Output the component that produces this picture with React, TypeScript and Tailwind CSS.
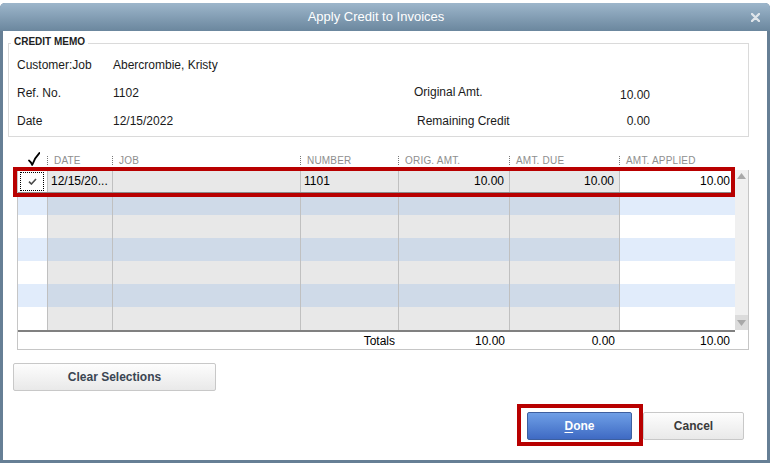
import React from "react";

type Col = { key: string; w: string; tint: "gray" | "white"; line: boolean };

const cols: Col[] = [
  { key: "chk", w: "w-[30px]", tint: "white", line: true },
  { key: "date", w: "w-[65px]", tint: "gray", line: true },
  { key: "job", w: "w-[188px]", tint: "gray", line: true },
  { key: "num", w: "w-[98px]", tint: "gray", line: true },
  { key: "orig", w: "w-[111px]", tint: "gray", line: true },
  { key: "due", w: "w-[110px]", tint: "gray", line: true },
  { key: "applied", w: "w-[115px]", tint: "white", line: false },
];

const headers = ["DATE", "JOB", "NUMBER", "ORIG. AMT.", "AMT. DUE", "AMT. APPLIED"];

function cellBg(tint: "gray" | "white", blue: boolean) {
  if (tint === "gray") return blue ? "bg-[#cfdae8]" : "bg-[#e8e8e8]";
  return blue ? "bg-[#e1ecfb]" : "bg-white";
}

function SmallCheck() {
  return (
    <svg width="9" height="7" viewBox="0 0 9 7">
      <path d="M1 3.6 L3.4 6 L8 1" fill="none" stroke="#4a4a4a" strokeWidth="1.6" />
    </svg>
  );
}

function HeaderCheck() {
  return (
    <svg width="12" height="14" viewBox="0 0 12 14">
      <path d="M1 8.5 C2.5 9.5 3.5 11 4.2 13 C5.8 8.5 8 4.5 11.5 1" fill="none" stroke="#000" strokeWidth="1.8" strokeLinecap="round" strokeLinejoin="round" />
    </svg>
  );
}

function DotSep() {
  return (
    <span className="flex flex-col gap-[1px] -ml-[1px]">
      {[0, 1, 2, 3, 4].map((d) => (
        <span key={d} className="block w-[1px] h-[1px] bg-[#777]" />
      ))}
    </span>
  );
}

function SelectedRow() {
  const vals: Record<string, string> = { date: "12/15/20...", num: "1101", orig: "10.00", due: "10.00", applied: "10.00" };
  return (
    <div className="flex h-[23px] border-b border-[#8c8c8c]">
      {cols.map((c) => {
        const bg = c.tint === "gray" ? "bg-[#e8e8e8]" : "bg-white";
        const right = c.key === "orig" || c.key === "due" || c.key === "applied";
        return (
          <div
            key={c.key}
            className={`${c.w} ${bg} ${c.line ? "border-r border-[#c0c0c0]" : ""} flex items-center ${right ? "justify-end pr-[5px]" : "pl-[3px]"} text-[12px] text-black`}
          >
            {c.key === "chk" ? (
              <div className="w-[24px] h-[19px] -ml-[1px] border border-dotted border-black flex items-center justify-center">
                <SmallCheck />
              </div>
            ) : (
              vals[c.key] ?? ""
            )}
          </div>
        );
      })}
    </div>
  );
}

export default function App() {
  const emptyRows = [1, 2, 3, 4, 5, 6];
  return (
    <div className="w-[772px] h-[465px] bg-white overflow-hidden" style={{ fontFamily: '"Liberation Sans", Arial, sans-serif' }}>
      <div className="w-[770px] h-[460px] mt-[3px] rounded-t-[5px] bg-[#667f95] flex flex-col overflow-hidden">
        {/* title bar */}
        <div className="h-[28px] bg-gradient-to-b from-[#9db6cb] to-[#6b879e] flex items-center">
          <div className="flex-1 text-center pl-[1px] text-[13px] text-white">Apply Credit to Invoices</div>
          <div className="w-[10px] mr-[9px] flex items-center">
            <svg width="9" height="9" viewBox="0 0 9 9">
              <path d="M1 1 L8 8 M8 1 L1 8" stroke="#dfe5ea" strokeWidth="2.4" strokeLinecap="round" />
            </svg>
          </div>
        </div>

        {/* content */}
        <div className="flex-1 mx-[3px] mb-[3px] bg-white relative flex flex-col">
          {/* credit memo */}
          <div className="relative mt-[12px] ml-[5px] w-[741px] h-[94px] border border-[#dadada] pt-[7px] pl-[8px] text-[12px] text-[#1a1a1a]">
            <div className="absolute -top-[9px] left-[2px] px-[3px] bg-white text-[10px] font-bold text-[#222] leading-[14px]">CREDIT MEMO</div>
            <div className="flex h-[28px] items-center">
              <div className="w-[96px]">Customer:Job</div>
              <div>Abercrombie, Kristy</div>
            </div>
            <div className="flex h-[28px] items-center">
              <div className="w-[96px]">Ref. No.</div>
              <div className="w-[301px]">1102</div>
              <div className="w-[236px] flex justify-between">
                <span>Original Amt.</span>
                <span className="mt-[3px]">10.00</span>
              </div>
            </div>
            <div className="flex h-[28px] items-center">
              <div className="w-[96px]">Date</div>
              <div className="w-[301px]">12/15/2022</div>
              <div className="w-[236px] flex justify-between pl-[3px]">
                <span>Remaining Credit</span>
                <span>0.00</span>
              </div>
            </div>
          </div>

          {/* header */}
          <div className="mt-[13px] ml-[15px] h-[20px] flex items-center text-[10px] text-[#8e8e8e] tracking-[0.2px]">
            {cols.map((c, i) => (
              <div key={c.key} className={`${c.w} flex items-center h-full`}>
                {i === 0 ? (
                  <div className="pl-[10px] -mt-[2px]">
                    <HeaderCheck />
                  </div>
                ) : (
                  <>
                    <DotSep />
                    <span className="pl-[6px]">{headers[i - 1]}</span>
                  </>
                )}
              </div>
            ))}
          </div>

          {/* grid */}
          <div className="ml-[14px] w-[732px] border-x border-b border-[#c6c6c6] flex flex-col">
            <div className="flex">
              <div className="w-[717px] flex flex-col">
                <SelectedRow />
                {emptyRows.map((r) => (
                  <div key={r} className={`flex ${r === 1 ? "h-[22px]" : "h-[23px]"}`}>
                    {cols.map((c) => (
                      <div key={c.key} className={`${c.w} ${cellBg(c.tint, r % 2 === 1)} ${c.line ? "border-r border-[#c0c0c0]" : ""}`} />
                    ))}
                  </div>
                ))}
              </div>
              <div className="w-[13px] bg-[#f0f0f0] flex flex-col justify-between">
                <div className="h-[17px] flex justify-center pt-[3px]">
                  <svg width="9" height="6" viewBox="0 0 9 6">
                    <path d="M0 6 L4.5 0 L9 6 Z" fill="#a8a8a8" />
                  </svg>
                </div>
                <div className="h-[15px] bg-[#dcdcdc] flex justify-center items-end pb-[4px]">
                  <svg width="9" height="6" viewBox="0 0 9 6">
                    <path d="M0 0 L4.5 6 L9 0 Z" fill="#a8a8a8" />
                  </svg>
                </div>
              </div>
            </div>
            <div className="h-[2px] w-[717px] bg-[#808080]" />
            <div className="flex h-[17px] items-center text-[12px] text-black">
              <div className="w-[283px]" />
              <div className="w-[98px] text-right pr-[4px]">Totals</div>
              <div className="w-[111px] text-right pr-[5px]">10.00</div>
              <div className="w-[110px] text-right pr-[5px]">0.00</div>
              <div className="w-[115px] text-right pr-[5px]">10.00</div>
            </div>
          </div>

          {/* clear selections */}
          <button className="mt-[13px] ml-[10px] w-[203px] h-[28px] rounded-[2px] border border-[#c8c8c8] bg-gradient-to-b from-[#fdfdfd] to-[#e9e9e9] text-[12px] font-bold text-[#3a4552]">
            Clear Selections
          </button>

          {/* bottom buttons */}
          <div className="mt-[21px] flex justify-end pr-[23px]">
            <button className="w-[105px] h-[28px] rounded-[2px] border border-[#3d5f9f] bg-gradient-to-b from-[#6f9fe6] to-[#3f6ac3] text-[12px] font-bold text-white">
              <span className="underline underline-offset-[2px]">D</span>one
            </button>
            <button className="ml-[11px] w-[101px] h-[28px] rounded-[2px] border border-[#c8c8c8] bg-gradient-to-b from-[#fdfdfd] to-[#e9e9e9] text-[12px] font-bold text-[#3a3a3a]">
              Cancel
            </button>
          </div>

          {/* red annotation boxes */}
          <div className="absolute left-[10px] top-[136px] w-[722px] h-[30px] border-[4px] border-[#b80000] pointer-events-none" />
          <div className="absolute left-[514px] top-[373px] w-[126px] h-[42px] border-[4px] border-[#b80000] pointer-events-none" />
        </div>
      </div>
    </div>
  );
}
